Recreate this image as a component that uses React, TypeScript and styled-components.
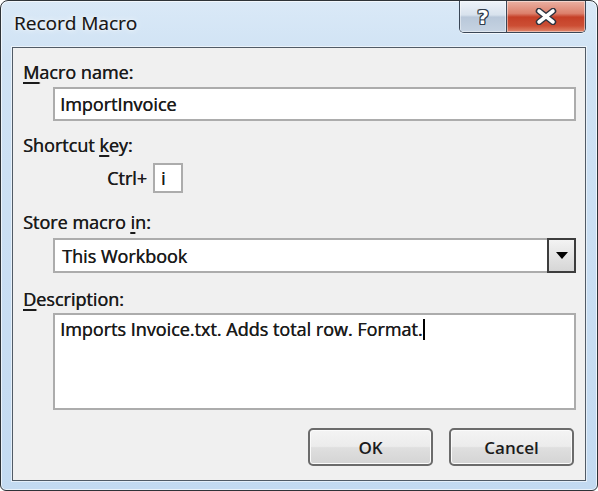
import styled, { createGlobalStyle } from "styled-components";

const GlobalStyle = createGlobalStyle`
  html, body {
    margin: 0;
    padding: 0;
    background: #ffffff;
  }

  body {
    font-family: "Open Sans", "Noto Sans", "Liberation Sans", sans-serif;
    color: #1b1b1b;
  }
`;

const Window = styled.div`
  width: 598px;
  height: 491px;
  box-sizing: border-box;
  display: flex;
  flex-direction: column;
  border: 1px solid #2e3338;
  border-radius: 8px 8px 6px 6px;
  background: linear-gradient(180deg, #dae9f7 0%, #cfe2f4 12%, #c3daf1 100%);
  box-shadow: inset 0 0 0 1px rgba(255, 255, 255, 0.65);
  overflow: hidden;
`;

const TitleBar = styled.div`
  height: 46px;
  flex: none;
  display: flex;
  justify-content: space-between;
  align-items: flex-start;
  padding: 0 11px 0 13px;
`;

const Title = styled.span`
  margin-top: 9px;
  font-size: 19px;
  line-height: 26px;
  color: #161616;
  text-shadow: 0 0 6px rgba(255, 255, 255, 0.95), 0 0 2px rgba(255, 255, 255, 0.9),
    0.3px 0 0 #161616;
`;

const CaptionButtons = styled.div`
  display: flex;
  height: 31px;
  border: 1px solid #3a4656;
  border-top: none;
  border-radius: 0 0 5px 5px;
  overflow: hidden;
  box-shadow: 0 1px 0 rgba(255, 255, 255, 0.7);
`;

const CaptionButton = styled.div<{ $close?: boolean }>`
  width: ${(p) => (p.$close ? 78 : 46)}px;
  display: flex;
  align-items: center;
  justify-content: center;
  background: ${(p) =>
    p.$close
      ? "linear-gradient(180deg, #eab1a3 0%, #dc806c 40%, #c53f27 52%, #cc4e34 80%, #e0876c 100%)"
      : "linear-gradient(180deg, #eef3f9 0%, #d8e2ed 45%, #b9c8da 52%, #c6d3e2 100%)"};
  border-left: ${(p) => (p.$close ? "1px solid #3a4656" : "none")};
  box-shadow: inset 0 0 0 1px rgba(255, 255, 255, 0.45);
`;

const HelpGlyph = styled.span`
  font-family: "DejaVu Sans", sans-serif;
  font-weight: bold;
  font-size: 20px;
  line-height: 20px;
  color: #ffffff;
  text-shadow: 1px 0 0 #2f3a48, -1px 0 0 #2f3a48, 0 1px 0 #2f3a48, 0 -1px 0 #2f3a48,
    1px 1px 0 #2f3a48, -1px -1px 0 #2f3a48, 1px -1px 0 #2f3a48, -1px 1px 0 #2f3a48;
`;

const Client = styled.div`
  flex: 1;
  margin: 0 11px 9px 11px;
  border: 1px solid #515b66;
  background: #f0f0f0;
  box-shadow: 0 0 0 1px rgba(255, 255, 255, 0.55);
  display: flex;
  flex-direction: column;
  padding: 14px 9px 0 10px;
  font-size: 18px;
  line-height: 20px;
  text-shadow: 0.4px 0 0 #1b1b1b;
`;

const Label = styled.div<{ $gap: number }>`
  margin-top: ${(p) => p.$gap}px;
  color: #1b1b1b;

  u {
    text-decoration-thickness: 2px;
    text-underline-offset: 3px;
  }
`;

const Field = styled.div<{ $height: number; $gap: number }>`
  margin: ${(p) => p.$gap}px 0 0 30px;
  height: ${(p) => p.$height}px;
  box-sizing: border-box;
  border: 2px solid #acacac;
  background: #ffffff;
  display: flex;
  align-items: center;
  padding-left: 5px;
`;

const Select = styled(Field)`
  padding-left: 7px;
  justify-content: space-between;
`;

const DropButton = styled.div`
  width: 29px;
  height: 35px;
  margin-right: -2px;
  box-sizing: border-box;
  border: 2px solid #3d3d3d;
  background: linear-gradient(180deg, #f3f3f3 0%, #e4e4e4 50%, #d6d6d6 100%);
  display: flex;
  align-items: center;
  justify-content: center;
`;

const TextArea = styled(Field)`
  align-items: flex-start;
  padding-top: 4px;
`;

const Caret = styled.span`
  display: inline-block;
  width: 2px;
  height: 21px;
  margin-left: 1px;
  background: #000000;
  vertical-align: -4px;
`;

const ShortcutRow = styled.div`
  margin: 8px 0 0 84px;
  display: flex;
  align-items: center;
  gap: 6px;
`;

const KeyBox = styled.div`
  width: 30px;
  height: 30px;
  box-sizing: border-box;
  border: 2px solid #acacac;
  background: #ffffff;
  padding-left: 6px;
  display: flex;
  align-items: center;
`;

const ButtonRow = styled.div`
  margin-top: 18px;
  padding-right: 2px;
  display: flex;
  justify-content: flex-end;
  gap: 16px;
`;

const Button = styled.button`
  width: 125px;
  height: 38px;
  border: 2px solid #6b6b6b;
  border-radius: 5px;
  background: linear-gradient(180deg, #f4f4f4 0%, #ececec 48%, #dfdfdf 52%, #d4d4d4 100%);
  box-shadow: inset 0 0 0 1px #fbfbfb;
  font-family: inherit;
  font-size: 17px;
  font-weight: 600;
  color: #1b1b1b;
`;

export default function App() {
  return (
    <>
      <GlobalStyle />
      <Window>
        <TitleBar>
          <Title>Record Macro</Title>
          <CaptionButtons>
            <CaptionButton>
              <HelpGlyph>?</HelpGlyph>
            </CaptionButton>
            <CaptionButton $close>
              <svg width="22" height="17" viewBox="0 0 22 17">
                <path d="M4 3 L18 14 M18 3 L4 14" stroke="#2e3440" strokeWidth="6.5" strokeLinecap="round" fill="none" />
                <path d="M4 3 L18 14 M18 3 L4 14" stroke="#ffffff" strokeWidth="3.6" strokeLinecap="round" fill="none" />
              </svg>
            </CaptionButton>
          </CaptionButtons>
        </TitleBar>
        <Client>
          <Label $gap={0}>
            <u>M</u>acro name:
          </Label>
          <Field $height={34} $gap={5}>ImportInvoice</Field>
          <Label $gap={14}>
            Shortcut <u>k</u>ey:
          </Label>
          <ShortcutRow>
            <span>Ctrl+</span>
            <KeyBox>i</KeyBox>
          </ShortcutRow>
          <Label $gap={19}>
            Store macro <u>i</u>n:
          </Label>
          <Select $height={35} $gap={6}>
            <span>This Workbook</span>
            <DropButton>
              <svg width="12" height="7" viewBox="0 0 12 7">
                <path d="M0 0 H12 L6 7 Z" fill="#000000" />
              </svg>
            </DropButton>
          </Select>
          <Label $gap={16}>
            <u>D</u>escription:
          </Label>
          <TextArea $height={97} $gap={4}>
            <span>
              Imports Invoice.txt. Adds total row. Format.
              <Caret />
            </span>
          </TextArea>
          <ButtonRow>
            <Button>OK</Button>
            <Button>Cancel</Button>
          </ButtonRow>
        </Client>
      </Window>
    </>
  );
}
